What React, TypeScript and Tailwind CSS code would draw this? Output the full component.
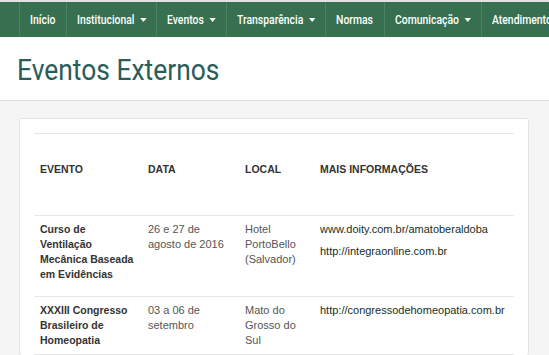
const navItems = [
  { label: "Início", caret: false, w: "w-[47px]" },
  { label: "Institucional", caret: true, w: "w-[90px]" },
  { label: "Eventos", caret: true, w: "w-[70px]" },
  { label: "Transparência", caret: true, w: "w-[99px]" },
  { label: "Normas", caret: false, w: "w-[59px]" },
  { label: "Comunicação", caret: true, w: "w-[97px]" },
  { label: "Atendimento", caret: false, w: "w-[90px]" },
];

function Caret() {
  return <span className="ml-[7px] inline-block w-0 h-0 border-x-[4px] border-x-transparent border-t-[4px] border-t-white" />;
}

export default function App() {
  return (
    <div className="bg-[#f5f5f5] overflow-hidden" style={{ width: 549, height: 355 }}>
      <div className="h-[2px] bg-[#e2e2e2]" />
      <nav className="h-[35px] bg-[#377050] flex pl-[19px] whitespace-nowrap">
        {navItems.map((item) => (
          <div
            key={item.label}
            className={`${item.w} shrink-0 flex items-center border-l border-[#4a8262] pl-[10px] overflow-visible`}
          >
            <span className="flex items-center origin-left scale-x-[0.8] text-white text-[13px] font-medium [font-family:'Roboto',sans-serif]">
              {item.label}
              {item.caret && <Caret />}
            </span>
          </div>
        ))}
      </nav>
      <header className="bg-white h-[64px] border-b border-[#dddddd] pl-[17px] flex items-center">
        <h1 className="origin-left scale-x-[0.88] text-[30px] leading-none text-[#2a5c5a] [font-family:'Roboto',sans-serif] font-normal pt-[3px]">
          Eventos Externos
        </h1>
      </header>
      <main className="pt-[17px] pl-[19px] pr-[20px]">
        <div className="bg-white border border-[#e3e3e3] rounded-[3px] p-[14px] pb-0">
          <table className="w-[480px] border-collapse table-fixed text-[11px] leading-[15px] [font-family:'Liberation_Sans',Arial,sans-serif]">
            <colgroup>
              <col className="w-[108px]" />
              <col className="w-[97px]" />
              <col className="w-[75px]" />
              <col className="w-[200px]" />
            </colgroup>
            <thead>
              <tr className="border-y border-[#e6e6e6] text-left text-[#333] text-[10.5px]">
                <th className="px-[6px] pt-[28px] pb-[38px] font-bold">EVENTO</th>
                <th className="px-[6px] pt-[28px] pb-[38px] font-bold">DATA</th>
                <th className="px-[6px] pt-[28px] pb-[38px] font-bold">LOCAL</th>
                <th className="px-[6px] pt-[28px] pb-[38px] font-bold">MAIS INFORMAÇÕES</th>
              </tr>
            </thead>
            <tbody className="align-top">
              <tr className="border-b border-[#e6e6e6]">
                <td className="px-[6px] pt-[6px] pb-[14px] font-bold text-[10.5px] text-[#333]">
                  Curso de Ventilação Mecânica Baseada em Evidências
                </td>
                <td className="px-[6px] pt-[6px] pb-[14px] text-[#555]">26 e 27 de agosto de 2016</td>
                <td className="px-[6px] pt-[6px] pb-[14px] text-[#555]">Hotel PortoBello (Salvador)</td>
                <td className="px-[6px] pt-[6px] pb-[14px] text-[#17301f] whitespace-nowrap">
                  <p>www.doity.com.br/amatoberaldoba</p>
                  <p className="mt-[7px]">http://integraonline.com.br</p>
                </td>
              </tr>
              <tr className="border-b border-[#e6e6e6]">
                <td className="px-[6px] pt-[6px] pb-[6px] font-bold text-[10.5px] text-[#333]">
                  XXXIII Congresso Brasileiro de Homeopatia
                </td>
                <td className="px-[6px] pt-[6px] pb-[6px] text-[#555]">03 a 06 de setembro</td>
                <td className="px-[6px] pt-[6px] pb-[6px] text-[#555]">Mato do Grosso do Sul</td>
                <td className="px-[6px] pt-[6px] pb-[6px] text-[#17301f] whitespace-nowrap">
                  http://congressodehomeopatia.com.br
                </td>
              </tr>
            </tbody>
          </table>
        </div>
      </main>
    </div>
  );
}
